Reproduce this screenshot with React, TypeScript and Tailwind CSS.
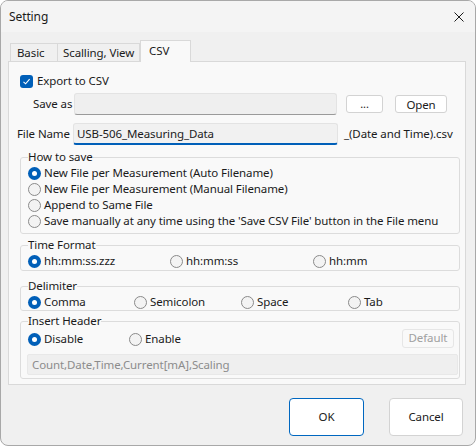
import React from "react";

function Radio({ checked, label, className = "" }: { checked?: boolean; label: string; className?: string }) {
  return (
    <div className={`flex items-center h-[16px] ${className}`}>
      {checked ? (
        <span className="w-[13px] h-[13px] rounded-full bg-[#005fb8] flex items-center justify-center shrink-0">
          <span className="w-[5px] h-[5px] rounded-full bg-white" />
        </span>
      ) : (
        <span className="w-[13px] h-[13px] rounded-full border border-[#8a8a8a] bg-[#f3f3f3] shrink-0" />
      )}
      <span className="ml-[3px] whitespace-nowrap">{label}</span>
    </div>
  );
}

function Group({ title, className = "", children }: { title: string; className?: string; children: React.ReactNode }) {
  return (
    <fieldset className={`ml-[11px] w-[440px] min-w-0 border border-[#dcdcdc] rounded-[3px] px-[7px] ${className}`}>
      <legend className="leading-[16px]">{title}</legend>
      {children}
    </fieldset>
  );
}

export default function App() {
  return (
    <div className="w-[476px] h-[446px] bg-[#f0f0f0] border border-[#a8a8a8] rounded-[8px] overflow-hidden font-['Noto_Sans',sans-serif] text-[11.5px] tracking-[-0.1px] text-[#1b1b1b]">
      {/* Title bar */}
      <div className="h-[31px] bg-[#f4f4f4] flex items-center justify-between pl-[8px] pr-[11px]">
        <span className="text-[12px]">Setting</span>
        <svg width="10" height="10" viewBox="0 0 10 10" className="mt-[1px]">
          <path d="M0.5 0.5 L9.5 9.5 M9.5 0.5 L0.5 9.5" stroke="#1b1b1b" strokeWidth="1" />
        </svg>
      </div>

      {/* Tabs */}
      <div className="mt-[8px] ml-[9px] flex items-end h-[22px] -mb-px relative">
        <div className="w-[48px] h-[19px] border border-[#d9d9d9] bg-[#f0f0f0] pl-[6px] leading-[17px]">Basic</div>
        <div className="w-[82px] h-[19px] border border-l-0 border-[#d9d9d9] bg-[#f0f0f0] pl-[5px] leading-[17px] whitespace-nowrap">Scalling, View</div>
        <div className="w-[51px] h-[22px] border border-b-0 border-[#d9d9d9] bg-[#f9f9f9] pl-[8px] leading-[19px]">CSV</div>
      </div>

      {/* Panel */}
      <div className="ml-[7px] w-[458px] h-[324px] border border-[#d9d9d9] bg-[#f9f9f9]">
        <div className="mt-[12px] ml-[11px] h-[14px] flex items-center">
          <span className="w-[13px] h-[13px] rounded-[3px] bg-[#005fb8] flex items-center justify-center">
            <svg width="9" height="9" viewBox="0 0 9 9">
              <path d="M1.5 4.8 L3.6 6.8 L7.6 2.2" stroke="white" strokeWidth="1.1" fill="none" />
            </svg>
          </span>
          <span className="ml-[4px]">Export to CSV</span>
        </div>

        <div className="mt-[5px] h-[22px] flex items-center">
          <span className="ml-[24px] w-[41px] whitespace-nowrap">Save as</span>
          <div className="w-[263px] h-[22px] bg-[#efefef] border border-[#e3e3e3] border-b-[#9a9a9a] rounded-[3px]" />
          <button className="ml-[9px] w-[37px] h-[18px] bg-white border border-[#d3d3d3] rounded-[3px] text-[11px] leading-[14px]">...</button>
          <button className="ml-[12px] w-[52px] h-[18px] bg-white border border-[#d3d3d3] rounded-[3px] leading-[15px]">Open</button>
        </div>

        <div className="mt-[8px] h-[22px] flex items-center">
          <span className="ml-[8px] w-[56px] whitespace-nowrap">File Name</span>
          <div className="w-[265px] h-[22px] bg-[#f1f1f1] border border-[#e3e3e3] border-b-2 border-b-[#005fb8] rounded-[3px] pl-[3px] leading-[19px]">USB-506_Measuring_Data</div>
          <span className="ml-[6px] whitespace-nowrap">_(Date and Time).csv</span>
        </div>

        <Group title="How to save" className="mt-[4px] pb-[4px]">
          <Radio checked label="New File per Measurement (Auto Filename)" />
          <Radio label="New File per Measurement (Manual Filename)" />
          <Radio label="Append to Same File" />
          <Radio label="Save manually at any time using the 'Save CSV File' button in the File menu" />
        </Group>

        <Group title="Time Format" className="mt-[3px] pb-[1px]">
          <div className="flex">
            <Radio checked label="hh:mm:ss.zzz" className="w-[142px]" />
            <Radio label="hh:mm:ss" className="w-[143px]" />
            <Radio label="hh:mm" />
          </div>
        </Group>

        <Group title="Delimiter" className="mt-[7px]">
          <div className="flex">
            <Radio checked label="Comma" className="w-[106px]" />
            <Radio label="Semicolon" className="w-[107px]" />
            <Radio label="Space" className="w-[107px]" />
            <Radio label="Tab" />
          </div>
        </Group>

        <Group title="Insert Header" className="mt-[2px] pb-[3px]">
          <div className="flex items-center h-[20px]">
            <Radio checked label="Disable" className="w-[101px]" />
            <Radio label="Enable" />
            <button className="ml-auto mr-[-2px] mb-[2px] w-[52px] h-[19px] bg-[#f9f9f9] border border-[#e6e6e6] rounded-[3px] text-[#a0a0a0] leading-[16px]">Default</button>
          </div>
          <div className="mt-[5px] -ml-[1px] w-[431px] h-[21px] bg-[#efefef] border border-[#e8e8e8] rounded-[2px] pl-[4px] leading-[19px] text-[#8c8c8c]">
            Count,Date,Time,Current[mA],Scaling
          </div>
        </Group>
      </div>

      {/* Bottom buttons */}
      <div className="mt-[13px] flex justify-end pr-[12px] gap-[25px]">
        <button className="w-[75px] h-[38px] bg-white border border-[#0067c0] rounded-[4px]">OK</button>
        <button className="w-[74px] h-[38px] bg-white border border-[#d3d3d3] rounded-[4px]">Cancel</button>
      </div>
    </div>
  );
}
